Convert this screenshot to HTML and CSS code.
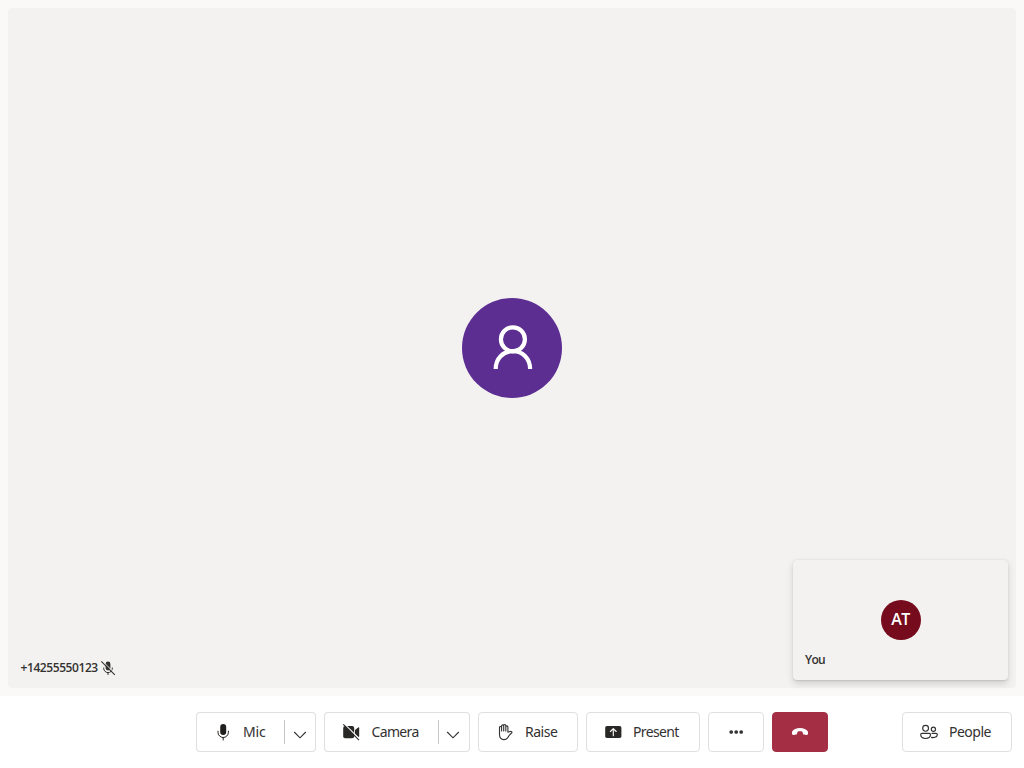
FILE: index.html
```html
<!DOCTYPE html>
<html lang="en">
<head>
<meta charset="utf-8">
<title>Call</title>
<link rel="stylesheet" href="styles.css">
</head>
<body>
<div class="call">
  <main class="stage">
    <section class="tile">
      <div class="avatar avatar-large">
        <svg width="100" height="100" viewBox="0 0 100 100" fill="none" stroke="#fff" stroke-width="4.2"><circle cx="50.9" cy="41.3" r="12"/><path d="M33.7 71C33.7 60.5 41 53.2 50.9 53.2S68.1 60.5 68.1 71"/></svg>
      </div>
      <div class="name remote-name">
        <span class="phone">+14255550123</span>
        <svg width="16" height="16" viewBox="0 0 16 16"><rect x="5.6" y="1.5" width="4.8" height="9" rx="2.4" fill="#323130"/><path d="M3.7 7.5v.8a4.3 4.3 0 0 0 8.6 0v-.8M8 12.6V15" fill="none" stroke="#323130"/><path d="M2.1.7 15.6 14.2" stroke="#f3f2f1" stroke-width="1"/><path d="M1.3 1.3 14.8 14.8" stroke="#323130" stroke-width="1.1"/></svg>
      </div>
    </section>
    <section class="self-view">
      <div class="avatar avatar-small">AT</div>
      <div class="name self-name">You</div>
    </section>
  </main>
  <footer class="controls">
    <div class="group">
      <div class="split">
        <button class="btn btn-mic"><svg class="icon" viewBox="0 0 20 20"><rect x="7.2" y="2" width="6" height="11" rx="3" fill="#201f1e"/><path d="M5 9.2v1.1a5.2 5.2 0 0 0 10.4 0V9.2M10.2 15.5V18" fill="none" stroke="#201f1e" stroke-linecap="round"/></svg><span class="label label-mic">Mic</span></button>
        <button class="btn arrow"><svg width="14" height="8" viewBox="0 0 14 8" fill="none" stroke="#323130" stroke-width="1.1"><path d="M1.2 1 7 6.8 12.8 1"/></svg></button>
      </div>
      <div class="split">
        <button class="btn btn-camera"><svg class="icon" viewBox="0 0 20 20"><rect x="2.2" y="4" width="11" height="12.3" rx="2" fill="#292827"/><path d="M14 8l3.2-2.5c.5-.4 1-.1 1 .5v8.3c0 .6-.5.9-1 .5L14 12.4z" fill="#292827"/><path d="M3.3 1.8 18.5 17" stroke="#fff" stroke-width="1.2"/><path d="M2.3 2.4 18 18.1" stroke="#292827" stroke-width="1.1"/></svg><span class="label label-camera">Camera</span></button>
        <button class="btn arrow arrow-camera"><svg width="14" height="8" viewBox="0 0 14 8" fill="none" stroke="#323130" stroke-width="1.1"><path d="M1.2 1 7 6.8 12.8 1"/></svg></button>
      </div>
      <button class="btn btn-raise"><svg class="icon" viewBox="0 0 20 20" fill="none" stroke="#323130" stroke-width="1.1" stroke-linecap="round" stroke-linejoin="round"><path d="M4.5 11V5.6c0-1.5 2.1-1.5 2.1 0V9V4c0-1.5 2.1-1.5 2.1 0V9V3.6c0-1.5 2.1-1.5 2.1 0V9V5c0-1.5 2.1-1.5 2.1 0v5.3l2.2-.8c1.1-.3 2.1.4 1.8 1.2-.2.6-1.6 1.3-2.4 2.3l-2.1 3.1C11.4 17.2 10.4 17.6 9 17.6c-3.2 0-4.5-2.3-4.5-5z"/></svg><span class="label label-raise">Raise</span></button>
      <button class="btn btn-present"><svg class="icon" viewBox="0 0 20 20"><rect x="2.2" y="4" width="16.2" height="12" rx="1.8" fill="#292827"/><path d="M10.3 13.7V6.7M7.4 9.5l2.9-2.9 2.9 2.9" fill="none" stroke="#fff" stroke-width="1.1" stroke-linecap="round" stroke-linejoin="round"/></svg><span class="label label-present">Present</span></button>
      <button class="btn square"><svg class="icon" viewBox="0 0 20 20" fill="#323130"><circle cx="5.2" cy="10" r="1.85"/><circle cx="10.2" cy="10" r="1.85"/><circle cx="15.2" cy="10" r="1.85"/></svg></button>
      <button class="btn square hangup"><svg class="icon" viewBox="0 0 20 20" fill="#fff"><path d="M10 6c3.6 0 6.6 1.3 7.7 3.2.5.8.5 1.8.2 2.7-.2.8-.9 1.2-1.7 1.1l-2-.4c-.7-.1-1.2-.6-1.3-1.2l-.4-1.7C11 9.2 9 9.2 7.5 9.7l-.4 1.7c-.1.6-.6 1.1-1.3 1.2l-2 .4c-.8.1-1.5-.3-1.7-1.1-.3-.9-.3-1.9.2-2.7C3.4 7.3 6.4 6 10 6z"/></svg></button>
    </div>
    <button class="btn btn-people"><svg class="icon" viewBox="0 0 20 20" fill="none" stroke="#323130" stroke-width="1.15"><circle cx="6.6" cy="6.3" r="2.9"/><circle cx="14.4" cy="7.2" r="2.1"/><path d="M3 11.4h7.2c.8 0 1.3.5 1.3 1.2 0 2.6-1.9 3.9-4.9 3.9s-4.9-1.3-4.9-3.9c0-.7.5-1.2 1.3-1.2zM13 11.4h4c.8 0 1.3.5 1.3 1.2 0 2-1.5 3-4.2 3-.6 0-1.1 0-1.6-.2" stroke-linecap="round"/></svg><span class="label label-people">People</span></button>
  </footer>
</div>
</body>
</html>
```
FILE: styles.css
```css
* { box-sizing: border-box; }
body {
  margin: 0;
  background: #fff;
  color: #323130;
  font-family: "Noto Sans", "Open Sans", sans-serif;
}
.call { height: 768px; display: flex; flex-direction: column; }
.stage {
  position: relative;
  height: 696px;
  padding: 8px;
  background: #faf9f8;
}
.tile {
  position: relative;
  height: 680px;
  display: flex;
  align-items: center;
  justify-content: center;
  background: #f3f2f1;
  border-radius: 4px;
}
.avatar {
  display: flex;
  align-items: center;
  justify-content: center;
  border-radius: 50%;
  color: #fff;
}
.avatar-large { width: 100px; height: 100px; background: #5c2e91; }
.avatar-small {
  width: 40px;
  height: 40px;
  background: #750b1c;
  font-family: "Open Sans", "Noto Sans", sans-serif;
  font-size: 16px;
  line-height: 20px;
  padding-bottom: 2px;
  font-weight: 600;
  letter-spacing: -0.6px;
}
.name { font: 600 12px/16px "Open Sans", "Noto Sans", sans-serif; }
.remote-name {
  position: absolute;
  left: 12px;
  bottom: 12px;
  display: flex;
  align-items: center;
  gap: 2px;
}
.phone { width: 78px; padding-left: .5px; white-space: nowrap; letter-spacing: -0.42px; }
.self-view {
  position: absolute;
  right: 16px;
  bottom: 16px;
  width: 215px;
  height: 120px;
  display: flex;
  align-items: center;
  justify-content: center;
  background: #f3f2f1;
  border-radius: 4px;
  box-shadow: 0 3.2px 7.2px rgba(0,0,0,.132), 0 .6px 1.8px rgba(0,0,0,.108);
}
.self-name { position: absolute; left: 12px; bottom: 12px; letter-spacing: -0.7px; }
.controls {
  position: relative;
  height: 72px;
  display: flex;
  align-items: center;
  justify-content: center;
}
.group { display: flex; gap: 8px; }
.btn {
  display: flex;
  align-items: center;
  height: 40px;
  margin: 0;
  padding: 0 16px;
  background: #fff;
  border: 1px solid #e1dfdd;
  border-radius: 4px;
  color: #323130;
  font: 14px/20px "Noto Sans", "Open Sans", sans-serif;
}
.icon { width: 20px; height: 20px; flex: none; }
.label { margin-left: 10px; white-space: nowrap; }
.split { position: relative; display: flex; }
.split::after {
  content: "";
  position: absolute;
  right: 31px;
  top: 8px;
  width: 1px;
  height: 24px;
  background: #c8c6c4;
}
.split .btn:first-child { border-right: 0; border-radius: 4px 0 0 4px; }
.arrow {
  width: 32px;
  padding: 5px 0 0;
  justify-content: center;
  border-left: 0;
  border-radius: 0 4px 4px 0;
}
.arrow-camera { padding-right: 1px; }
.btn-mic { width: 88px; }
.btn-camera { width: 114px; }
.btn-raise { width: 100px; }
.btn-present { width: 114px; }
.label-mic { letter-spacing: -0.2px; }
.label-camera { margin-left: 10.5px; letter-spacing: -0.65px; }
.label-raise { letter-spacing: -0.5px; }
.label-present { letter-spacing: -0.65px; }
.label-people { letter-spacing: -0.5px; }
.square { width: 56px; padding: 0; justify-content: center; }
.hangup { background: #a42e43; border-color: #a42e43; }
.btn-people { position: absolute; right: 12px; width: 110px; }
```
